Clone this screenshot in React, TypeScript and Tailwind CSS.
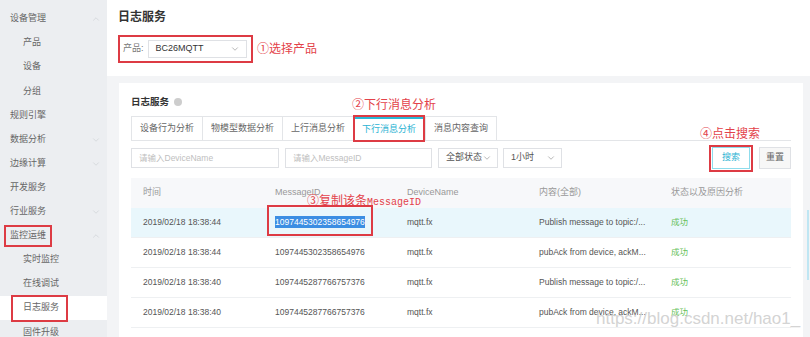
import { ChevronDown, ChevronUp } from 'lucide-react';

const FONT = "font-['Liberation_Sans','Noto_Sans_CJK_SC',sans-serif]";

type NavItem = { label: string; sub?: boolean; arrow?: 'up' | 'down'; boxed?: boolean; active?: boolean };

const NAV: NavItem[] = [
  { label: '设备管理', arrow: 'up' },
  { label: '产品', sub: true },
  { label: '设备', sub: true },
  { label: '分组', sub: true },
  { label: '规则引擎' },
  { label: '数据分析', arrow: 'down' },
  { label: '边缘计算', arrow: 'down' },
  { label: '开发服务' },
  { label: '行业服务', arrow: 'down' },
  { label: '监控运维', arrow: 'up', boxed: true },
  { label: '实时监控', sub: true },
  { label: '在线调试', sub: true },
  { label: '日志服务', sub: true, boxed: true, active: true },
  { label: '固件升级', sub: true },
];

const TABS = ['设备行为分析', '物模型数据分析', '上行消息分析', '下行消息分析', '消息内容查询'];

const ROWS = [
  { time: '2019/02/18 18:38:44', id: '1097445302358654976', content: 'Publish message to topic:/...' },
  { time: '2019/02/18 18:38:44', id: '1097445302358654976', content: 'pubAck from device, ackM...' },
  { time: '2019/02/18 18:38:40', id: '1097445287766757376', content: 'Publish message to topic:/...' },
  { time: '2019/02/18 18:38:40', id: '1097445287766757376', content: 'pubAck from device, ackM...' },
];

const COLS = ['时间', 'MessageID', 'DeviceName', '内容(全部)', '状态以及原因分析'];

function Note({ children, className }: { children: React.ReactNode; className?: string }) {
  return (
    <span className={`absolute whitespace-nowrap text-[12px] leading-none text-[#e3424a] ${className ?? ''}`}>
      {children}
    </span>
  );
}

function Sidebar() {
  return (
    <div className="w-[107px] shrink-0 bg-[#eceef1] pt-[7px]">
      {NAV.map((item) => (
        <div
          key={item.label}
          className={`relative flex h-[24.1px] items-center text-[9px] text-[#666] ${item.sub ? 'pl-[23px]' : 'pl-[10px]'} ${item.active ? 'bg-white' : ''}`}
        >
          <span className="relative">
            {item.label}
            {item.boxed && (
              <span
                className={`absolute border-2 border-[#dd3b44] ${item.sub ? '-left-[12px] -right-[9px] -top-[6px] -bottom-[7px]' : '-left-[6px] -right-[6px] -top-[4px] -bottom-[4px]'}`}
              />
            )}
          </span>
          {item.arrow === 'up' && <ChevronUp className="absolute right-[6px] h-[10px] w-[10px] text-[#d3d6da]" />}
          {item.arrow === 'down' && <ChevronDown className="absolute right-[6px] h-[10px] w-[10px] text-[#d3d6da]" />}
        </div>
      ))}
    </div>
  );
}

export default function App() {
  return (
    <div className={`relative flex h-[337px] w-[810px] overflow-hidden bg-[#f3f4f6] ${FONT}`}>
      <Sidebar />
      <div className="flex min-w-0 flex-1 flex-col">
        {/* page header */}
        <div className="h-[76px] shrink-0 bg-white pl-[11px] pt-[9px]">
          <h1 className="text-[12px] font-bold leading-[16px] text-[#333]">日志服务</h1>
          <div className="relative mt-[10px] flex h-[28px] w-[135px] items-center border-2 border-[#dd3b44] pl-[3px]">
            <span className="text-[9px] text-[#777]">产品:</span>
            <div className="ml-[4px] flex h-[18px] w-[99px] items-center justify-between border border-[#dfe1e5] pl-[7px] pr-[6px] text-[9px] text-[#333]">
              <span>BC26MQTT</span>
              <ChevronDown className="h-[10px] w-[10px] text-[#aaa]" />
            </div>
            <Note className="left-[137px] top-[6px]">①选择产品</Note>
          </div>
        </div>

        {/* card */}
        <div className="ml-[12px] mr-[7px] mt-[7px] flex-1 bg-white px-[12px] pt-[12px]">
          <div className="flex h-[14px] items-center gap-[5px]">
            <span className="text-[9.5px] font-bold text-[#333]">日志服务</span>
            <span className="h-[8px] w-[8px] rounded-full bg-[#cdcdcd]" />
          </div>

          {/* tabs */}
          <div className="mt-[8px] flex h-[24px] items-end border-b border-[#e3e5e8]">
            {TABS.map((t, i) =>
              i === 3 ? (
                <div
                  key={t}
                  className="relative -mb-px flex h-[24px] items-center border-x border-t-2 border-x-[#e3e5e8] border-t-[#2bb8d6] bg-white px-[8px] text-[9px] text-[#2bb3d3]"
                >
                  {t}
                  <span className="absolute -inset-x-[1px] -bottom-[1px] -top-[4px] border-2 border-[#dd3b44]" />
                  <Note className="-left-[2px] -top-[20px]">②下行消息分析</Note>
                </div>
              ) : (
                <div
                  key={t}
                  className="flex h-[24px] items-center border-l border-t border-[#e3e5e8] px-[8px] text-[9px] text-[#666] last:border-r"
                >
                  {t}
                </div>
              ),
            )}
          </div>

          {/* filters */}
          <div className="mt-[6px] flex h-[22px] items-center">
            <div className="flex h-[20px] w-[148px] items-center border border-[#dfe1e5] pl-[7px] text-[8.5px] text-[#c0c0c0]">请输入DeviceName</div>
            <div className="ml-[6px] flex h-[20px] w-[147px] items-center border border-[#dfe1e5] pl-[7px] text-[8.5px] text-[#c0c0c0]">请输入MessageID</div>
            <div className="ml-[6px] flex h-[20px] w-[60px] items-center justify-between border border-[#dfe1e5] pl-[7px] pr-[5px] text-[9px] text-[#555]">
              全部状态
              <ChevronDown className="h-[10px] w-[10px] text-[#aaa]" />
            </div>
            <div className="ml-[5px] flex h-[20px] w-[59px] items-center justify-between border border-[#dfe1e5] pl-[7px] pr-[5px] text-[9px] text-[#555]">
              1小时
              <ChevronDown className="h-[10px] w-[10px] text-[#aaa]" />
            </div>
            <div className="relative ml-auto flex h-[22px] w-[38px] items-center justify-center border border-[#8edcec] text-[9px] text-[#2bb3d3]">
              搜索
              <span className="absolute -inset-x-[4px] -bottom-[4px] -top-[3px] border-2 border-[#dd3b44]" />
              <Note className="-left-[13px] -top-[20px]">④点击搜索</Note>
            </div>
            <div className="ml-[9px] flex h-[22px] w-[32px] items-center justify-center border border-[#dfe1e5] bg-[#f7f7f7] text-[9px] text-[#666]">重置</div>
          </div>

          {/* table */}
          <div className="mt-[9px]">
            <div className="grid h-[30px] grid-cols-5 items-center bg-[#f7f8fa] text-[9px] text-[#999]">
              {COLS.map((c) => (
                <div key={c} className="pl-[12px]">{c}</div>
              ))}
            </div>
            {ROWS.map((r, i) => (
              <div
                key={i}
                className={`grid h-[30px] grid-cols-5 items-center border-b border-[#eef0f2] text-[8.5px] text-[#555] ${i === 0 ? 'bg-[#e9f7fc]' : ''}`}
              >
                <div className="pl-[12px]">{r.time}</div>
                <div className="relative pl-[12px]">
                  {i === 0 ? (
                    <>
                      <span className="bg-[#3b8ee3] py-[1px] text-white">{r.id}</span>
                      <span className="absolute -top-[11px] left-[4px] h-[31px] w-[106px] border-2 border-[#dd3b44]" />
                      <Note className="-top-[21px] left-[44px]">
                        ③复制该条<span className="font-['Liberation_Mono',monospace] text-[10px]">MessageID</span>
                      </Note>
                    </>
                  ) : (
                    r.id
                  )}
                </div>
                <div className="pl-[12px]">mqtt.fx</div>
                <div className="pl-[12px]">{r.content}</div>
                <div className="pl-[12px] text-[#66c15a]">成功</div>
              </div>
            ))}
          </div>
        </div>
      </div>

      <span className="absolute right-[1px] top-[210px] h-[70px] w-[2px] bg-[#bfe6f3]" />
      <span className="absolute left-[596px] top-[306px] whitespace-nowrap text-[17px] text-[#c8c8c8]/80">https://blog.csdn.net/hao1_</span>
    </div>
  );
}
